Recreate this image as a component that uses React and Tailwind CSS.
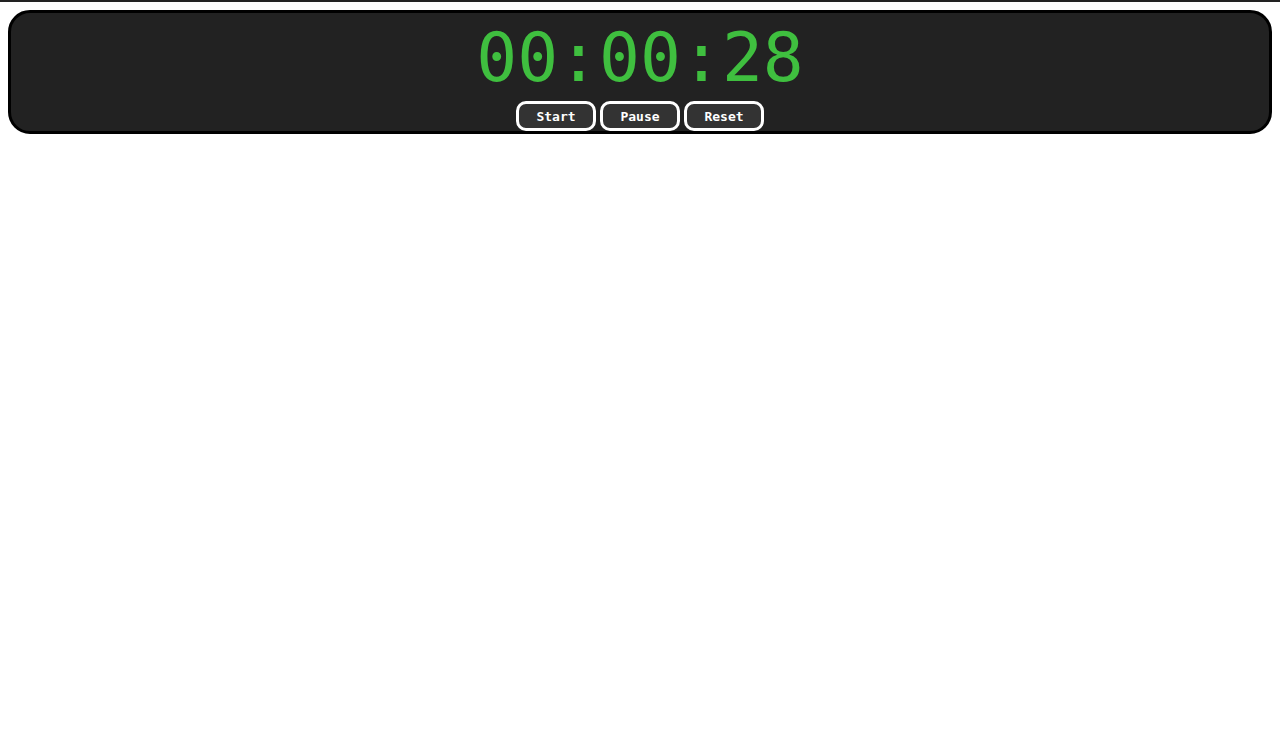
import { useEffect, useState } from "react";

function pad(n) {
  return String(n).padStart(2, "0");
}

export default function App() {
  const [seconds, setSeconds] = useState(28);
  const [running, setRunning] = useState(false);

  useEffect(() => {
    if (!running) return;
    const t = setInterval(() => setSeconds((s) => s + 1), 1000);
    return () => clearInterval(t);
  }, [running]);

  const h = Math.floor(seconds / 3600);
  const m = Math.floor((seconds % 3600) / 60);
  const s = seconds % 60;

  const btn =
    "w-[80px] h-[30px] pt-[2px] rounded-[10px] border-[3px] border-white bg-[#333333] text-white text-[13px] font-bold";

  return (
    <div className="min-h-[733px] bg-white font-['DejaVu_Sans_Mono',monospace]">
      <div className="h-[2px] bg-[#222222]" />
      <div className="px-2 pt-2">
        <div className="bg-[#222222] border-[3px] border-black rounded-[22px] flex flex-col items-center">
          <div className="text-[#3fbf3f] text-[68px] leading-[86px] mt-[2px]">
            {pad(h)}:{pad(m)}:{pad(s)}
          </div>
          <div className="flex gap-1">
            <button className={btn} onClick={() => setRunning(true)}>Start</button>
            <button className={btn} onClick={() => setRunning(false)}>Pause</button>
            <button className={btn} onClick={() => { setRunning(false); setSeconds(0); }}>Reset</button>
          </div>
        </div>
      </div>
    </div>
  );
}
